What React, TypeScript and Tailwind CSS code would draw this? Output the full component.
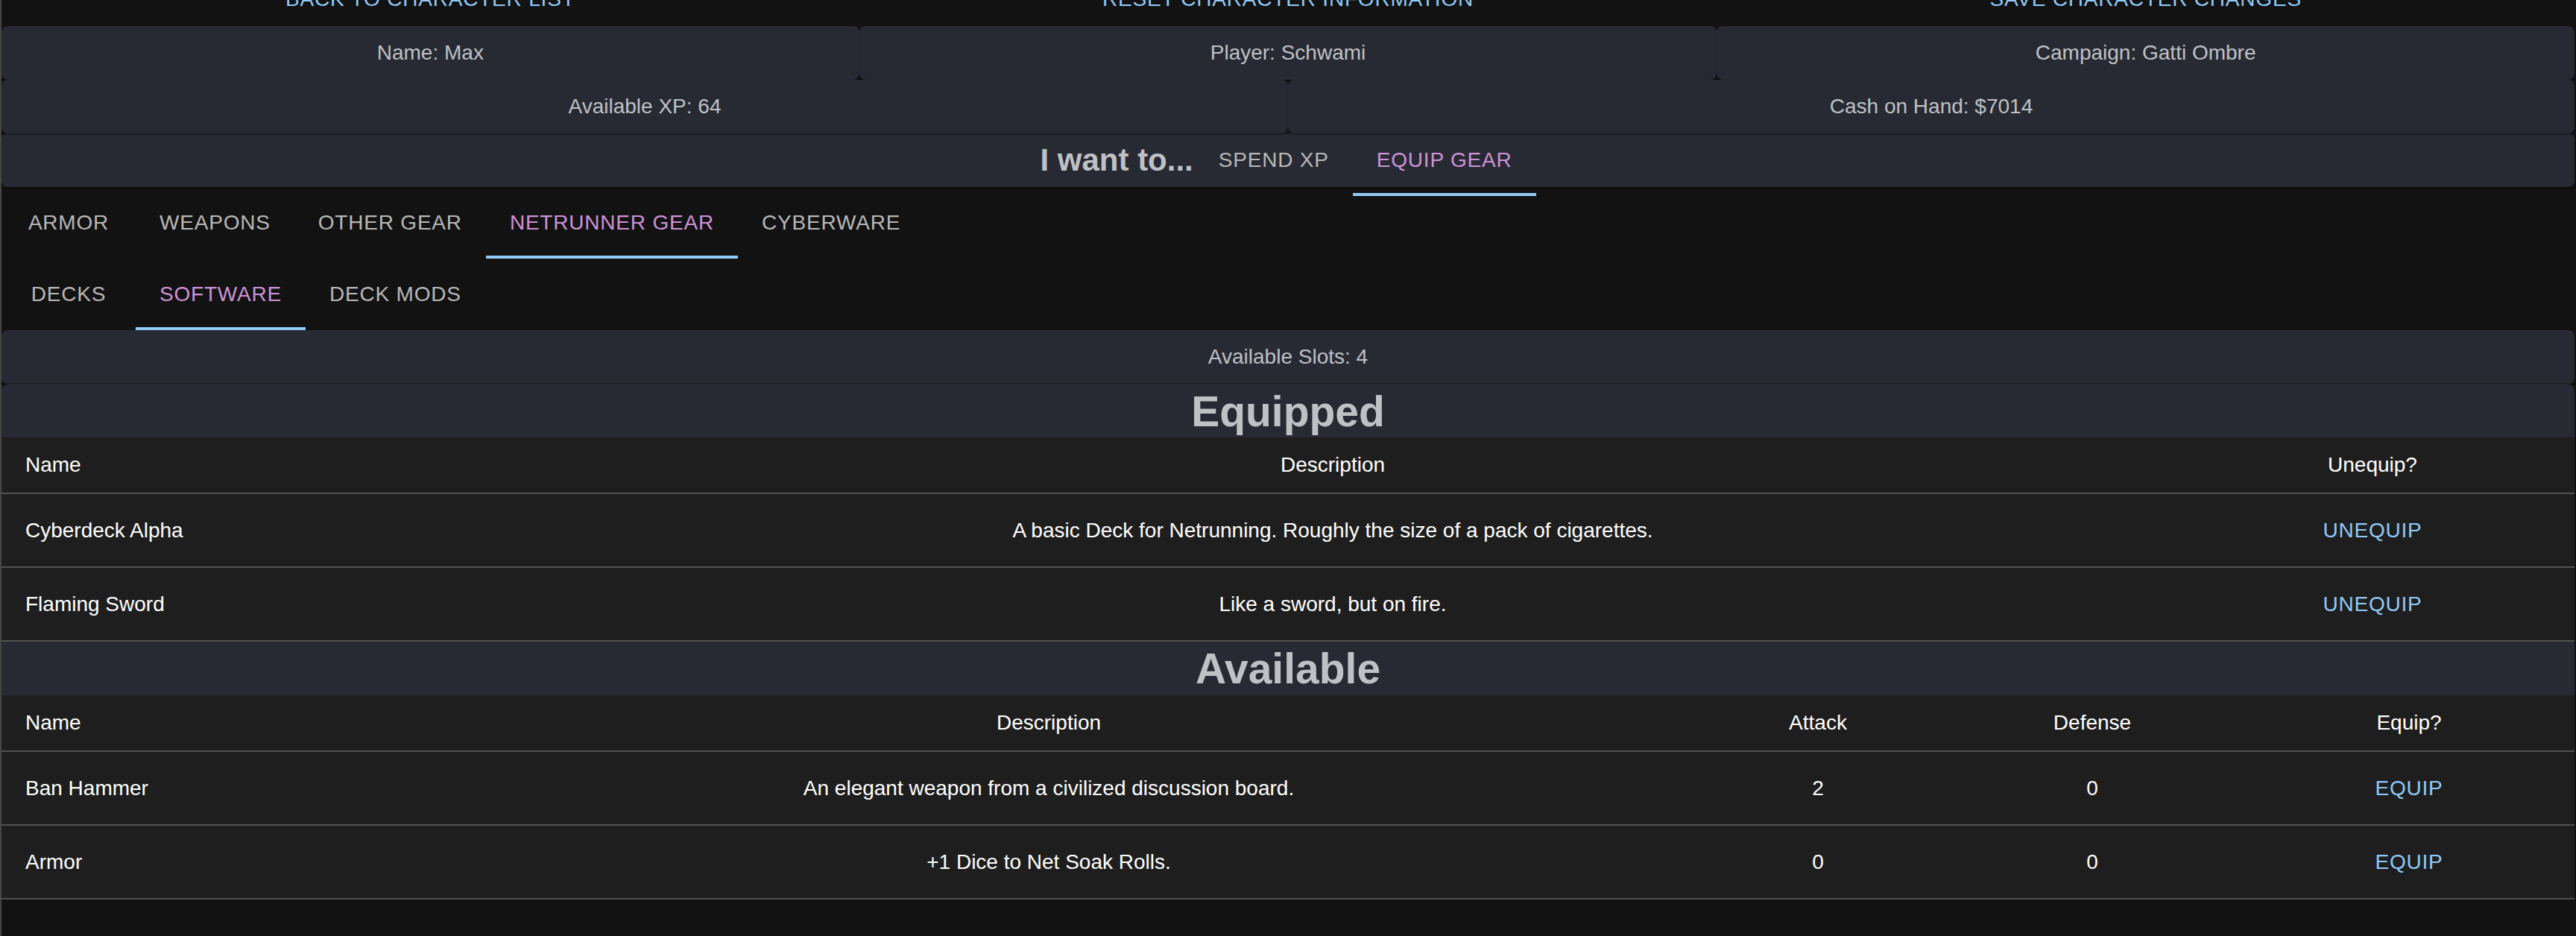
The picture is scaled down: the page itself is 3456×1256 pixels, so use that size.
import React from "react";

const paper =
  "bg-[#272a33] rounded-lg shadow-[0_2px_2px_-1px_rgba(0,0,0,0.35),0_1px_2px_0_rgba(0,0,0,0.3)]";

function Tab({ label, selected, h = "h-[96px]" }: { label: string; selected?: boolean; h?: string }) {
  return (
    <div
      className={`relative ${h} min-w-[180px] px-[32px] flex items-center justify-center text-[28px] uppercase tracking-[0.8px] leading-[40px] ${
        selected ? "text-[#ce93d8]" : "text-[#b8b8b8]"
      }`}
    >
      {label}
      {selected && <div className="absolute left-0 right-0 bottom-0 h-[4px] bg-[#90caf9]" />}
    </div>
  );
}

function TextButton({ label }: { label: string }) {
  return (
    <button className="h-[73px] px-[16px] text-[28px] uppercase tracking-[0.8px] text-[#90caf9] leading-[49px]">
      {label}
    </button>
  );
}

const th = "py-[13px] px-[32px] leading-[48px] text-[28px] font-medium text-white border-b-2 border-[#515151]";
const td = "py-[12px] px-[32px] leading-[48px] text-[28px] text-white border-b-2 border-[#515151]";

export default function App() {
  return (
    <div className="min-h-[1256px] bg-[#121212] border-l-2 border-[#464646] pr-[2px] overflow-hidden font-['Liberation_Sans',Arial,sans-serif]">
      {/* top buttons (scrolled partly out of view) */}
      <div className="-mt-[38px] h-[73px] grid grid-cols-3">
        <div className="flex items-center justify-center">
          <TextButton label="Back to Character List" />
        </div>
        <div className="flex items-center justify-center">
          <TextButton label="Reset Character Information" />
        </div>
        <div className="flex items-center justify-center">
          <TextButton label="Save Character Changes" />
        </div>
      </div>

      {/* info row 1 */}
      <div className="grid grid-cols-3">
        {["Name: Max", "Player: Schwami", "Campaign: Gatti Ombre"].map((t) => (
          <div key={t} className={`${paper} h-[72px] flex items-center justify-center text-[28px] text-[#bfc1c5]`}>
            {t}
          </div>
        ))}
      </div>
      {/* info row 2 */}
      <div className="grid grid-cols-2">
        {["Available XP: 64", "Cash on Hand: $7014"].map((t) => (
          <div key={t} className={`${paper} h-[72px] flex items-center justify-center text-[28px] text-[#bfc1c5]`}>
            {t}
          </div>
        ))}
      </div>
      {/* I want to row */}
      <div className={`${paper} h-[72px] flex items-center justify-center`}>
        <span className="text-[42px] font-bold text-[#bfc1c5] leading-[50px]">I want to...</span>
        <div className="flex items-center ml-[2px]">
          <Tab label="Spend XP" />
          <Tab label="Equip Gear" selected />
        </div>
      </div>

      {/* gear tabs */}
      <div className="flex">
        <Tab label="Armor" />
        <Tab label="Weapons" />
        <Tab label="Other Gear" />
        <Tab label="Netrunner Gear" selected />
        <Tab label="Cyberware" />
      </div>
      <div className="flex">
        <Tab label="Decks" />
        <Tab label="Software" selected />
        <Tab label="Deck Mods" />
      </div>

      <div className={`${paper} h-[73px] flex items-center justify-center text-[28px] text-[#bfc1c5] border-b-2 border-[#1f2127]`}>
        Available Slots: 4
      </div>

      {/* Equipped */}
      <div className="bg-[#272a33] rounded-t-lg h-[71px] flex items-center justify-center">
        <h2 className="text-[57px] font-bold text-[#bfc1c5] leading-[70px]">Equipped</h2>
      </div>
      <div className="bg-[#1e1e1e]">
        <table className="w-full table-fixed border-collapse">
          <colgroup>
            <col className="w-[662px]" />
            <col />
            <col className="w-[542px]" />
          </colgroup>
          <thead>
            <tr>
              <th className={`${th} text-left`}>Name</th>
              <th className={`${th} text-center`}>Description</th>
              <th className={`${th} text-center`}>Unequip?</th>
            </tr>
          </thead>
          <tbody>
            <tr>
              <td className={`${td} text-left`}>Cyberdeck Alpha</td>
              <td className={`${td} text-center`}>A basic Deck for Netrunning. Roughly the size of a pack of cigarettes.</td>
              <td className={`${td} text-center`}>
                <TextButton label="Unequip" />
              </td>
            </tr>
            <tr>
              <td className={`${td} text-left`}>Flaming Sword</td>
              <td className={`${td} text-center`}>Like a sword, but on fire.</td>
              <td className={`${td} text-center`}>
                <TextButton label="Unequip" />
              </td>
            </tr>
          </tbody>
        </table>
      </div>

      {/* Available */}
      <div className="bg-[#272a33] h-[72px] flex items-center justify-center">
        <h2 className="text-[57px] font-bold text-[#bfc1c5] leading-[70px]">Available</h2>
      </div>
      <div className="bg-[#1e1e1e]">
        <table className="w-full table-fixed border-collapse">
          <colgroup>
            <col className="w-[538px]" />
            <col />
            <col className="w-[330px]" />
            <col className="w-[406px]" />
            <col className="w-[444px]" />
          </colgroup>
          <thead>
            <tr>
              <th className={`${th} text-left`}>Name</th>
              <th className={`${th} text-center`}>Description</th>
              <th className={`${th} text-center`}>Attack</th>
              <th className={`${th} text-center`}>Defense</th>
              <th className={`${th} text-center`}>Equip?</th>
            </tr>
          </thead>
          <tbody>
            <tr>
              <td className={`${td} text-left`}>Ban Hammer</td>
              <td className={`${td} text-center`}>An elegant weapon from a civilized discussion board.</td>
              <td className={`${td} text-center`}>2</td>
              <td className={`${td} text-center`}>0</td>
              <td className={`${td} text-center`}>
                <TextButton label="Equip" />
              </td>
            </tr>
            <tr>
              <td className={`${td} text-left`}>Armor</td>
              <td className={`${td} text-center`}>+1 Dice to Net Soak Rolls.</td>
              <td className={`${td} text-center`}>0</td>
              <td className={`${td} text-center`}>0</td>
              <td className={`${td} text-center`}>
                <TextButton label="Equip" />
              </td>
            </tr>
          </tbody>
        </table>
      </div>
    </div>
  );
}
